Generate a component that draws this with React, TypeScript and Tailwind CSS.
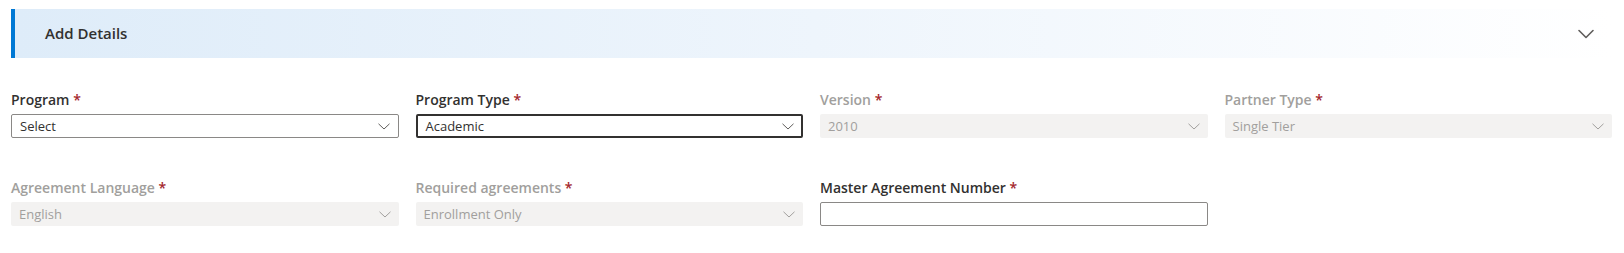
import { ChevronDown } from 'lucide-react';

type Field = {
  label: string;
  value?: string;
  disabled?: boolean;
  focused?: boolean;
  text?: boolean;
};

const rows: Field[][] = [
  [
    { label: 'Program', value: 'Select' },
    { label: 'Program Type', value: 'Academic', focused: true },
    { label: 'Version', value: '2010', disabled: true },
    { label: 'Partner Type', value: 'Single Tier', disabled: true },
  ],
  [
    { label: 'Agreement Language', value: 'English', disabled: true },
    { label: 'Required agreements', value: 'Enrollment Only', disabled: true },
    { label: 'Master Agreement Number', text: true },
  ],
];

function SmallChevron({ muted }: { muted?: boolean }) {
  return (
    <svg width="12" height="7" viewBox="0 0 12 7" fill="none" className="shrink-0">
      <path d="M0.5 0.8 L6 6 L11.5 0.8" stroke={muted ? '#a19f9d' : '#605e5c'} strokeWidth="1" />
    </svg>
  );
}

function FormField({ field }: { field: Field }) {
  const labelColor = field.disabled ? 'text-[#a19f9d]' : 'text-[#323130]';

  let box = 'h-6 flex items-center justify-between rounded-[2px] text-[13px] pl-2 pr-2';
  if (field.disabled) box += ' bg-[#f3f2f1] text-[#a19f9d]';
  else if (field.focused) box += ' border-2 border-[#323130] pl-[8px] pr-[7px] text-[#323130]';
  else box += ' border border-[#8a8886] text-[#323130]';

  return (
    <div className="flex flex-col gap-1">
      <label className={`text-[14px] leading-5 font-semibold ${labelColor}`}>
        {field.label} <span className="text-[#a4262c]">*</span>
      </label>
      <div className={box}>
        <span className="leading-none">{field.value ?? ''}</span>
        {!field.text && <SmallChevron muted={field.disabled} />}
      </div>
    </div>
  );
}

export default function App() {
  return (
    <div className="w-[1624px] h-[253px] bg-white pl-[11px] pr-[12px] pt-[9px]" style={{ fontFamily: '"Open Sans", "Noto Sans", sans-serif' }}>
      <div className="h-[49px] flex items-center justify-between border-l-4 border-[#0078d4] bg-gradient-to-r from-[#deecf9] via-[#eef5fc] to-white pl-[30px] pr-[12px]">
        <h2 className="text-[15px] font-semibold text-[#323130]">Add Details</h2>
        <ChevronDown size={28} strokeWidth={1.4} className="text-[#605e5c]" />
      </div>

      <div className="mt-[32px] flex flex-col gap-10">
        {rows.map((row, i) => (
          <div key={i} className="grid grid-cols-4 gap-x-[17px]">
            {row.map(f => (
              <FormField key={f.label} field={f} />
            ))}
          </div>
        ))}
      </div>
    </div>
  );
}
